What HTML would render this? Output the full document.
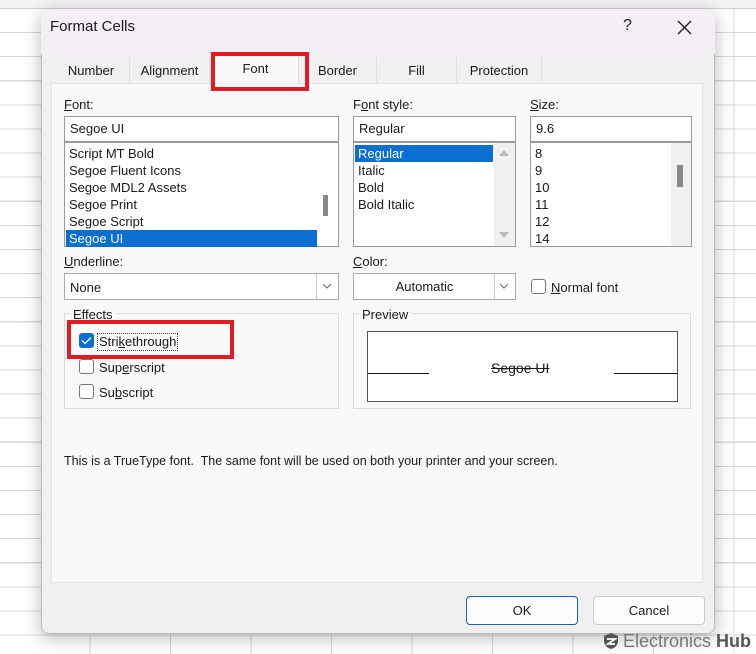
<!DOCTYPE html>
<html><head><meta charset="utf-8"><style>
*{margin:0;padding:0;box-sizing:border-box}
body{width:756px;height:654px;overflow:hidden;position:relative;font-family:"Liberation Sans",sans-serif;font-size:13px;color:#1a1a1a;
background-color:#fff;
background-image:repeating-linear-gradient(to bottom,transparent 0,transparent 23px,#d8d8d8 23px,#d8d8d8 24.1px),repeating-linear-gradient(to right,transparent 0,transparent 79.5px,#d8d8d8 79.5px,#d8d8d8 80.5px);
background-position:0 9px,10px 0}
.a{position:absolute}
.dlg{left:41px;top:9px;width:674px;height:625px;background:#f0f0f0;border:1px solid #bdbdbd;border-radius:8px;box-shadow:0 4px 18px rgba(0,0,0,.28)}
.title{left:41px;top:9px;width:674px;height:45px;background:#f4eff4;border-radius:8px 8px 0 0}
.panel{left:51px;top:83px;width:652px;height:500px;background:#f9f9f9;border:1px solid #e4e4e4}
.tab{top:57px;height:26px;text-align:center;line-height:28px;font-size:13px;border-right:1px solid #e0e0e0;background:#f0f0f0}
.box{background:#fff;border:1px solid #999}
.lst{background:#fff;border:1px solid #999}
.sel{background:#0a6fd1;color:#fff}
.u{text-decoration:underline}
.it{position:absolute;left:4px;height:17px;line-height:17px}
.btn{background:#fdfdfd;border:1px solid #ccc;border-radius:4px;text-align:center;line-height:27px}
.cb{width:15px;height:15px;border:1px solid #777;border-radius:3px;background:#fff}
.grp{border:1px solid #dcdcdc}
</style></head><body>
<div class="a" style="left:0;top:0;width:756px;height:9px;background:#f3f3f3;border-bottom:1px solid #d0d0d0"></div>
<div class="a dlg"></div>
<div class="a title"></div>
<div class="a" style="left:50px;top:18px;font-size:15px">Format Cells</div>
<div class="a" style="left:623px;top:17px;font-size:16px">?</div>
<svg class="a" style="left:677px;top:20px" width="15" height="15"><path d="M1 1L14 14M14 1L1 14" stroke="#222" stroke-width="1.4"/></svg>
<div class="a panel"></div>
<div class="a tab" style="left:53px;width:77px">Number</div>
<div class="a tab" style="left:130px;width:80px">Alignment</div>
<div class="a tab" style="left:213px;width:86px;top:55px;height:30px;background:#f9f9f9;line-height:28px">Font</div>
<div class="a tab" style="left:299px;width:78px">Border</div>
<div class="a tab" style="left:377px;width:80px">Fill</div>
<div class="a tab" style="left:457px;width:85px">Protection</div>
<div class="a" style="left:211px;top:52px;width:98px;height:39px;border:4px solid #e21b23"></div>

<div class="a" style="left:64px;top:97px"><span class="u">F</span>ont:</div>
<div class="a box" style="left:64px;top:116px;width:275px;height:26px;padding:4px 5px">Segoe UI</div>
<div class="a lst" style="left:64px;top:142px;width:275px;height:105px">
<div class="it" style="top:2px">Script MT Bold</div>
<div class="it" style="top:19px">Segoe Fluent Icons</div>
<div class="it" style="top:36px">Segoe MDL2 Assets</div>
<div class="it" style="top:53px">Segoe Print</div>
<div class="it" style="top:70px">Segoe Script</div>
<div class="it sel" style="top:87px;left:1px;width:251px;padding-left:3px">Segoe UI</div>
<div class="a" style="left:258px;top:52px;width:5px;height:21px;background:#888"></div>
</div>

<div class="a" style="left:353px;top:97px">F<span class="u">o</span>nt style:</div>
<div class="a box" style="left:353px;top:116px;width:163px;height:26px;padding:4px 5px">Regular</div>
<div class="a lst" style="left:353px;top:142px;width:163px;height:105px;background:#fff">
<div class="it sel" style="top:2px;left:1px;width:138px;padding-left:3px">Regular</div>
<div class="it" style="top:19px">Italic</div>
<div class="it" style="top:36px">Bold</div>
<div class="it" style="top:53px">Bold Italic</div>
<div class="a" style="left:140px;top:0;width:21px;height:103px;background:#f0f0f0"></div>
<div class="a" style="left:145px;top:7px;border:5px solid transparent;border-bottom:6px solid #bbb;border-top:0"></div>
<div class="a" style="left:145px;top:89px;border:5px solid transparent;border-top:6px solid #bbb;border-bottom:0"></div>
</div>

<div class="a" style="left:530px;top:97px"><span class="u">S</span>ize:</div>
<div class="a box" style="left:530px;top:116px;width:162px;height:26px;padding:4px 5px">9.6</div>
<div class="a lst" style="left:530px;top:142px;width:162px;height:105px">
<div class="it" style="top:2px">8</div>
<div class="it" style="top:19px">9</div>
<div class="it" style="top:36px">10</div>
<div class="it" style="top:53px">11</div>
<div class="it" style="top:70px">12</div>
<div class="it" style="top:87px">14</div>
<div class="a" style="left:140px;top:0;width:20px;height:103px;background:#f0f0f0"></div>
<div class="a" style="left:146px;top:22px;width:6px;height:22px;background:#888"></div>
</div>

<div class="a" style="left:64px;top:254px"><span class="u">U</span>nderline:</div>
<div class="a box" style="left:64px;top:273px;width:275px;height:27px;padding:6px 5px;border-color:#aaa">None</div>
<div class="a" style="left:316px;top:274px;width:22px;height:25px;border-left:1px solid #ccc;background:#fff"></div>
<svg class="a" style="left:322px;top:283px" width="10" height="6"><path d="M1 1L5 5L9 1" stroke="#666" fill="none"/></svg>

<div class="a" style="left:353px;top:254px"><span class="u">C</span>olor:</div>
<div class="a box" style="left:353px;top:273px;width:163px;height:27px;border-color:#aaa;text-align:center;line-height:26px;padding-right:20px">Automatic</div>
<div class="a" style="left:494px;top:274px;width:21px;height:25px;border-left:1px solid #ccc;background:#fff"></div>
<svg class="a" style="left:499px;top:283px" width="10" height="6"><path d="M1 1L5 5L9 1" stroke="#666" fill="none"/></svg>
<div class="a cb" style="left:531px;top:279px"></div>
<div class="a" style="left:551px;top:280px"><span class="u">N</span>ormal font</div>

<div class="a grp" style="left:64px;top:313px;width:275px;height:96px"></div>
<div class="a" style="left:70px;top:307px;background:#f9f9f9;padding:0 3px">Effects</div>
<div class="a" style="left:79px;top:333px;width:15px;height:15px;background:#0a6fd1;border-radius:3px"></div>
<svg class="a" style="left:81px;top:336px" width="11" height="9"><path d="M1 4.5L4 7.5L10 1.5" stroke="#fff" fill="none" stroke-width="1.3"/></svg>
<div class="a" style="left:97px;top:333px;border:1px dotted #444;padding:0 1px;line-height:16px">Stri<span class="u">k</span>ethrough</div>
<div class="a cb" style="left:79px;top:359px"></div>
<div class="a" style="left:99px;top:360px">Sup<span class="u">e</span>rscript</div>
<div class="a cb" style="left:79px;top:384px"></div>
<div class="a" style="left:99px;top:385px">Su<span class="u">b</span>script</div>
<div class="a" style="left:67px;top:320px;width:167px;height:39px;border:4px solid #e21b23"></div>

<div class="a grp" style="left:353px;top:313px;width:338px;height:96px"></div>
<div class="a" style="left:359px;top:307px;background:#f9f9f9;padding:0 3px">Preview</div>
<div class="a" style="left:367px;top:331px;width:311px;height:71px;background:#fff;border:1px solid #555"></div>
<div class="a" style="left:368px;top:373px;width:61px;height:1px;background:#111"></div>
<div class="a" style="left:614px;top:373px;width:63px;height:1px;background:#111"></div>
<div class="a" style="left:491px;top:360px;font-size:14px;text-decoration:line-through">Segoe UI</div>

<div class="a" style="left:64px;top:454px;font-size:12.5px">This is a TrueType font.&nbsp; The same font will be used on both your printer and your screen.</div>

<div class="a btn" style="left:466px;top:596px;width:112px;height:29px;border-color:#1a5fa8">OK</div>
<div class="a btn" style="left:593px;top:596px;width:112px;height:29px">Cancel</div>

<svg class="a" style="left:603px;top:632px" width="16" height="18"><path d="M8 1L15 4V9C15 13 12 16 8 17C4 16 1 13 1 9V4Z" fill="#555"/><path d="M4 7H12L5 12H12" stroke="#fff" stroke-width="1.8" fill="none"/></svg>
<div class="a" style="left:623px;top:631px;font-size:18px;color:#777;white-space:nowrap">Electronics <b style="color:#555">Hub</b></div>
</body></html>
